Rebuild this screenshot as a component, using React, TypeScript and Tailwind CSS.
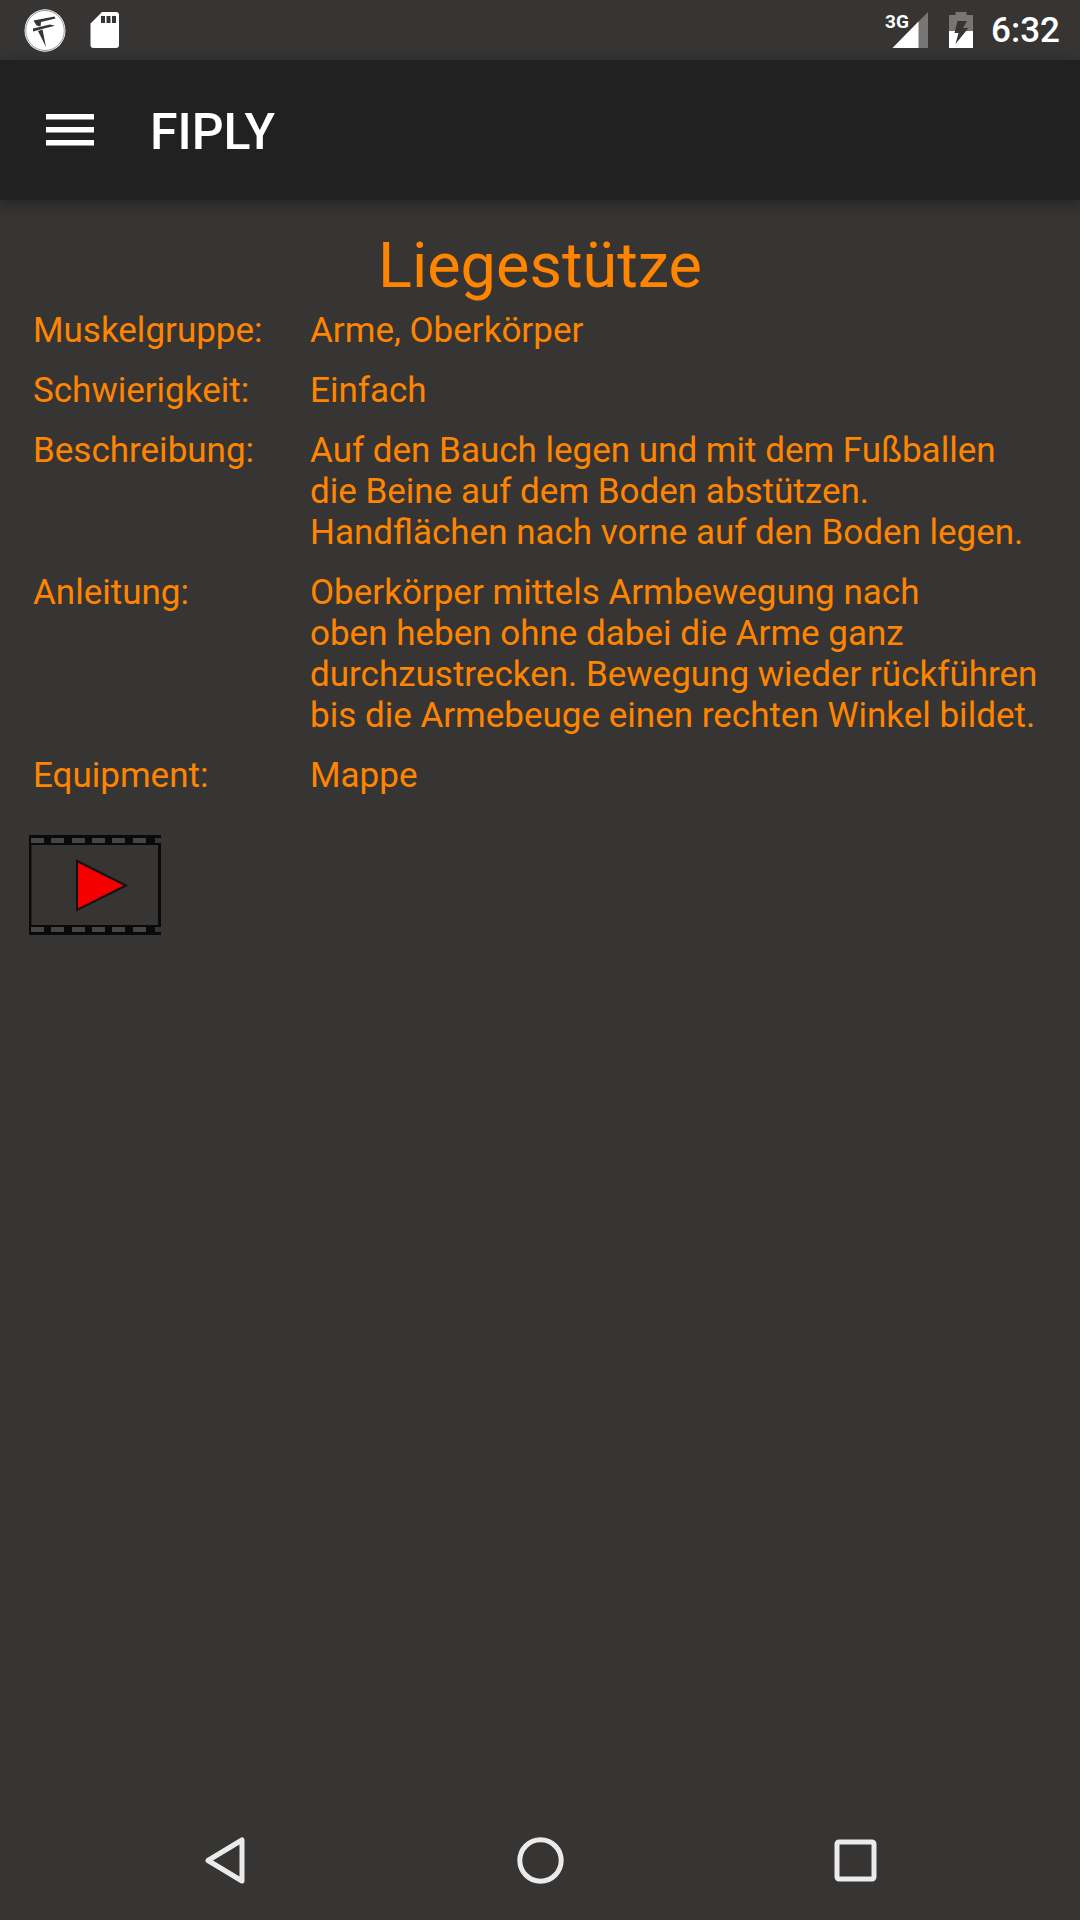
import React from "react";

const details = [
  { label: "Muskelgruppe:", lines: ["Arme, Oberkörper"] },
  { label: "Schwierigkeit:", lines: ["Einfach"] },
  {
    label: "Beschreibung:",
    lines: [
      "Auf den Bauch legen und mit dem Fußballen",
      "die Beine auf dem Boden abstützen.",
      "Handflächen nach vorne auf den Boden legen.",
    ],
  },
  {
    label: "Anleitung:",
    lines: [
      "Oberkörper mittels Armbewegung nach",
      "oben heben ohne dabei die Arme ganz",
      "durchzustrecken. Bewegung wieder rückführen",
      "bis die Armebeuge einen rechten Winkel bildet.",
    ],
  },
  { label: "Equipment:", lines: ["Mappe"] },
];

function StatusBar() {
  return (
    <div className="flex h-[60px] shrink-0 items-center justify-between pl-6 pr-5 text-white">
      <div className="flex items-center gap-6">
        <svg className="h-11 w-[42px]" viewBox="0 0 42 44" aria-hidden="true">
          <ellipse cx="21" cy="22.5" rx="20.5" ry="21.2" fill="#fff" />
          <ellipse cx="21" cy="22.5" rx="19.3" ry="20" fill="none" stroke="#8c8c8b" strokeWidth="0.9" />
          <path d="M9.500 12.500L30.500 8.500L31.500 10.500L17 14L16.500 18.500L12.500 17.500Z" fill="#363533" />
          <path d="M9 20.500L26 16.500L31 17.800L20 20.500L9 23.500Z" fill="#363533" />
          <path d="M14 23L18.500 21.500L22 39Z" fill="#363533" />
        </svg>
        <svg className="h-9 w-[30px]" viewBox="0 0 30 36" aria-hidden="true">
          <path
            fillRule="evenodd"
            fill="#fff"
            d="M12 0H26Q29 0 29 3V33Q29 36 26 36H3.500Q.5 36 .5 33V11.500ZM11 4V11H15V4ZM16.500 4V11H20.500V4ZM22 4V11H26V4Z"
          />
        </svg>
      </div>
      <div className="flex items-center">
        <div className="relative h-9 w-11">
          <span className="absolute left-0 top-0 text-[19px] font-bold leading-5">3G</span>
          <svg className="h-9 w-11" viewBox="0 0 44 36" aria-hidden="true">
            <path d="M43 0V36H7.500Z" fill="#777675" />
            <path d="M33.500 9.500V36H7.500Z" fill="#fff" />
          </svg>
        </div>
        <svg className="ml-5 h-9 w-6" viewBox="0 0 24 36" aria-hidden="true">
          <path d="M0 3H6.500V0H17.500V3H24V19H0Z" fill="#777675" />
          <path d="M0 19H24V36H0Z" fill="#fff" />
          <path d="M8.500 9H18L14 16H19.500L6.500 32L9.500 21H5.500Z" fill="#363533" />
        </svg>
        <time className="ml-[18px] pt-0.5 text-[35px] font-medium leading-[42px]">6:32</time>
      </div>
    </div>
  );
}

function AppBar() {
  return (
    <header className="z-10 flex h-[140px] shrink-0 items-center gap-14 bg-[#212121] pl-[46px] shadow-[0_4px_14px_rgba(0,0,0,0.35)]">
      <button type="button" aria-label="Menü">
        <svg className="h-8 w-12" viewBox="0 0 48 32" aria-hidden="true">
          <path d="M0 0H48V5.500H0ZM0 13H48V18.500H0ZM0 26H48V31.500H0Z" fill="#fff" />
        </svg>
      </button>
      <span className="pt-1 text-[50px] font-medium leading-[58px] text-white">FIPLY</span>
    </header>
  );
}

function FilmIcon() {
  const holes = [2, 22, 43, 63, 83, 104];
  return (
    <svg className="h-[102px] w-[134px]" viewBox="0 0 134 102" aria-hidden="true">
      <path d="M0 0H132V3H126V8H132V92H126V97H132V100H0ZM2.500 10V90H129V10Z" fill="#0a0a0a" fillRule="evenodd" />
      {holes.map((x) => (
        <g key={x} fill="#464543">
          <rect x={x} y="3" width="13" height="5" />
          <rect x={x} y="92" width="13" height="5" />
        </g>
      ))}
      <path d="M48 26L97 50.500L48 75Z" fill="#f50000" stroke="#15100f" strokeWidth="2" />
    </svg>
  );
}

function NavBar() {
  return (
    <nav className="flex h-[120px] shrink-0 items-center justify-center gap-[251px]">
      <button type="button" aria-label="Zurück">
        <svg className="h-16 w-16" viewBox="0 0 64 64" fill="none" stroke="#ebebeb" aria-hidden="true">
          <path d="M49 12V53L15 32.500Z" strokeWidth="5" strokeLinejoin="round" />
        </svg>
      </button>
      <button type="button" aria-label="Startseite">
        <svg className="h-16 w-16" viewBox="0 0 64 64" fill="none" stroke="#ebebeb" aria-hidden="true">
          <circle cx="32.500" cy="32.500" r="20.700" strokeWidth="5" />
        </svg>
      </button>
      <button type="button" aria-label="Übersicht">
        <svg className="h-16 w-16" viewBox="0 0 64 64" fill="none" stroke="#ebebeb" aria-hidden="true">
          <rect x="14" y="14" width="37" height="37" rx="2" strokeWidth="5" />
        </svg>
      </button>
    </nav>
  );
}

export default function App() {
  return (
    <div className="flex min-h-screen flex-col bg-[#363533] font-['Roboto',sans-serif]">
      <StatusBar />
      <AppBar />
      <main className="grow px-[33px] pt-[29px] text-[#ff8500]">
        <h1 className="text-center text-[63px] leading-[74px]">Liegestütze</h1>
        <dl className="mt-[7px] flex flex-col gap-[19px] text-[35px] leading-[41px]">
          {details.map((d) => (
            <div key={d.label} className="flex">
              <dt className="w-[277px] shrink-0">{d.label}</dt>
              <dd>
                {d.lines.map((line) => (
                  <div key={line}>{line}</div>
                ))}
              </dd>
            </div>
          ))}
        </dl>
        <button type="button" aria-label="Video abspielen" className="-ml-1 mt-[39px] block">
          <FilmIcon />
        </button>
      </main>
      <NavBar />
    </div>
  );
}
